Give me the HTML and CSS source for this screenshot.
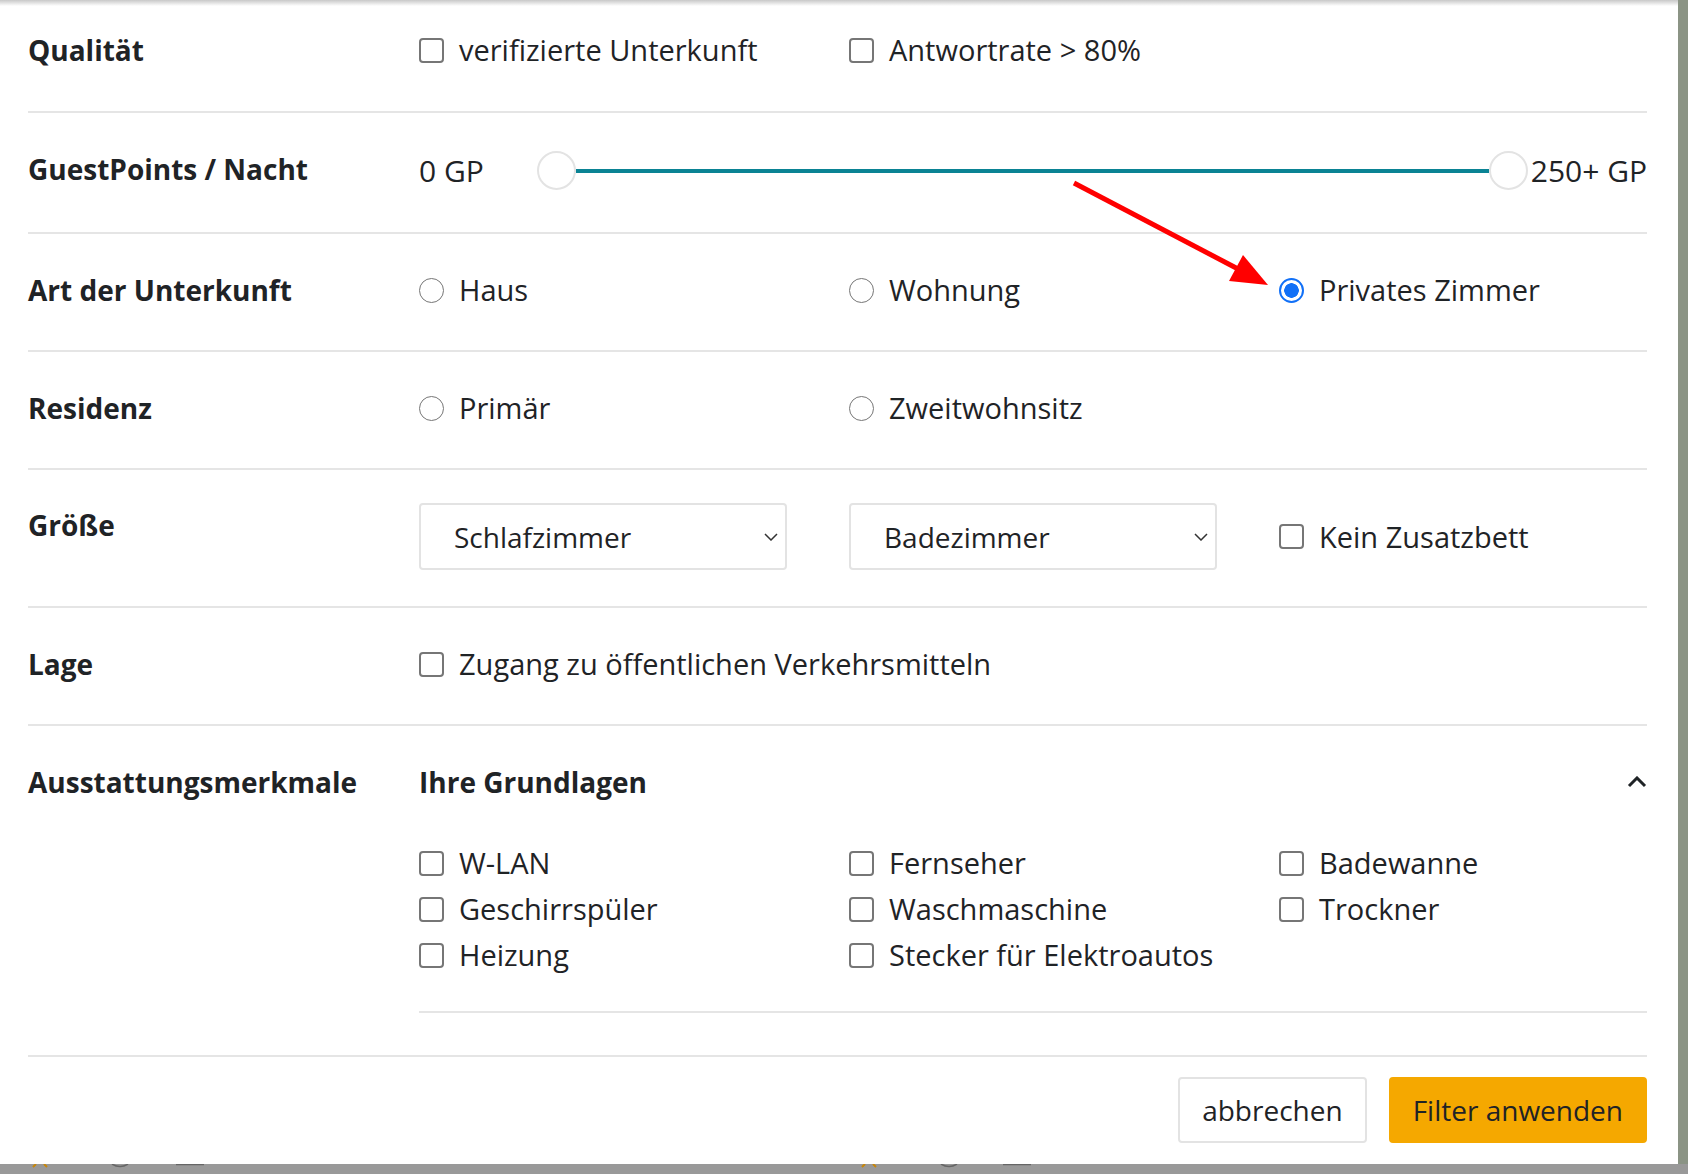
FILE: index.html
```html
<!DOCTYPE html>
<html lang="de">

<head>
    <meta charset="UTF-8">
    <meta name="viewport" content="width=device-width, initial-scale=1.0">
    <title>Filter</title>
    <link rel="stylesheet" href="styles.css">
</head>

<body>
    <div class="page">
        <div class="modal">
            <div class="modal-shadow"></div>
            <div class="modal-body">
                <div class="row row-first">
                    <div class="row-label">Qualität</div>
                    <div class="opts">
                        <label class="opt"><span class="box"></span>verifizierte Unterkunft</label>
                        <label class="opt"><span class="box"></span>Antwortrate &gt; 80%</label>
                    </div>
                </div>
                <div class="row">
                    <div class="row-label">GuestPoints / Nacht</div>
                    <div class="range">
                        <span class="range-text">0 GP</span>
                        <div class="range-bar">
                            <span class="thumb"></span>
                            <span class="track"></span>
                            <span class="thumb"></span>
                        </div>
                        <span class="range-text range-max">250+ GP</span>
                    </div>
                </div>
                <div class="row">
                    <div class="row-label">Art der Unterkunft</div>
                    <div class="opts">
                        <label class="opt"><span class="radio"></span>Haus</label>
                        <label class="opt"><span class="radio"></span>Wohnung</label>
                        <label class="opt"><span class="radio checked"></span>Privates Zimmer</label>
                    </div>
                </div>
                <div class="row">
                    <div class="row-label">Residenz</div>
                    <div class="opts">
                        <label class="opt"><span class="radio"></span>Primär</label>
                        <label class="opt"><span class="radio"></span>Zweitwohnsitz</label>
                    </div>
                </div>
                <div class="row row-size">
                    <div class="row-label">Größe</div>
                    <div class="opts">
                        <div class="select">Schlafzimmer
                            <svg width="14" height="8" viewBox="0 0 14 8"><path d="M1 1l6 6 6-6" fill="none" stroke="#333" stroke-width="1.5"/></svg>
                        </div>
                        <div class="select">Badezimmer
                            <svg width="14" height="8" viewBox="0 0 14 8"><path d="M1 1l6 6 6-6" fill="none" stroke="#333" stroke-width="1.5"/></svg>
                        </div>
                        <label class="opt"><span class="box"></span>Kein Zusatzbett</label>
                    </div>
                </div>
                <div class="row">
                    <div class="row-label">Lage</div>
                    <div class="opts">
                        <label class="opt opt-wide"><span class="box"></span>Zugang zu öffentlichen Verkehrsmitteln</label>
                    </div>
                </div>
                <div class="row row-last">
                    <div class="row-label">Ausstattungsmerkmale</div>
                    <div class="features">
                        <div class="features-head">
                            <span class="features-title">Ihre Grundlagen</span>
                            <svg width="20" height="12" viewBox="0 0 20 12"><path d="M2 10l8-8 8 8" fill="none" stroke="#1f2326" stroke-width="3"/></svg>
                        </div>
                        <div class="opts features-list">
                            <label class="opt"><span class="box"></span>W-LAN</label>
                            <label class="opt"><span class="box"></span>Fernseher</label>
                            <label class="opt"><span class="box"></span>Badewanne</label>
                            <label class="opt"><span class="box"></span>Geschirrspüler</label>
                            <label class="opt"><span class="box"></span>Waschmaschine</label>
                            <label class="opt"><span class="box"></span>Trockner</label>
                            <label class="opt"><span class="box"></span>Heizung</label>
                            <label class="opt"><span class="box"></span>Stecker für Elektroautos</label>
                        </div>
                    </div>
                </div>
            </div>
            <div class="modal-foot">
                <button class="btn">abbrechen</button>
                <button class="btn btn-primary">Filter anwenden</button>
            </div>
        </div>
        <div class="side"></div>
    </div>
    <div class="page-bottom">
        <!-- tops of the page icons peeking out under the modal -->
        <svg width="1688" height="11" viewBox="0 0 1688 11">
            <path d="M33 3l3-3M47 3l-3-3" stroke="#c8860a" stroke-width="2"/>
            <path d="M112 0q8 5 16 0" fill="none" stroke="#666" stroke-width="1.5"/>
            <path d="M176 0.5h28" stroke="#666" stroke-width="1.5"/>
            <path d="M862 3l3-3M876 3l-3-3" stroke="#c8860a" stroke-width="2"/>
            <path d="M941 0q8 5 16 0" fill="none" stroke="#666" stroke-width="1.5"/>
            <path d="M1003 0.5h28" stroke="#666" stroke-width="1.5"/>
        </svg>
    </div>

    <svg class="arrow" width="1688" height="1174" viewBox="0 0 1688 1174">
        <line x1="1074" y1="183" x2="1240" y2="270" stroke="#ff0000" stroke-width="5"/>
        <polygon points="1268,285 1229,281 1243,255" fill="#ff0000"/>
    </svg>
</body>

</html>
```

FILE: styles.css
```css
html * {
    padding: 0;
    margin: 0;
    box-sizing: border-box;
}

body {
    position: relative;
    width: 1688px;
    height: 1174px;
    overflow: hidden;
    background: #999;
    font-family: "Open Sans", "Noto Sans", sans-serif;
    color: #1f2326;
}

.page {
    display: flex;
    height: 1164px;
}

.side {
    width: 10px;
    background: #8b9485;
}

.page-bottom {
    height: 10px;
    background: #999;
}

.page-bottom svg {
    display: block;
}

.modal {
    flex: 1;
    display: flex;
    flex-direction: column;
    background: #fff;
    padding: 0 31px 0 28px;
    position: relative;
}

.modal-shadow {
    position: absolute;
    left: 0;
    right: 0;
    top: 0;
    height: 6px;
    background: linear-gradient(#c8c8c8, rgba(255, 255, 255, 0));
}

.row {
    display: grid;
    grid-template-columns: 391px 1fr;
    padding: 38px 0 42px;
    border-bottom: 2px solid #e5e5e5;
}

.row-first {
    padding-top: 32px;
    padding-bottom: 43px;
}

.row-size {
    padding-top: 33px;
    padding-bottom: 36px;
}

.row-size .row-label {
    margin-top: 4px;
}

.row-last {
    padding-bottom: 42px;
}

.row-label {
    font-weight: bold;
    font-size: 28px;
    line-height: 36px;
}

.opts {
    display: grid;
    grid-template-columns: repeat(3, 1fr);
    column-gap: 62px;
    align-items: center;
}

.opt {
    display: flex;
    align-items: center;
    gap: 15px;
    font-size: 29px;
    line-height: 36px;
    white-space: nowrap;
}

.opt-wide {
    grid-column: span 3;
}

.box {
    width: 25px;
    height: 25px;
    flex: none;
    border: 2px solid #767676;
    border-radius: 4px;
}

.radio {
    width: 25px;
    height: 25px;
    flex: none;
    border: 1.5px solid #767676;
    border-radius: 50%;
}

.radio.checked {
    border: 2px solid #1170f7;
    background: radial-gradient(circle, #1170f7 0 7px, #fff 7.5px);
}

.range {
    display: flex;
    align-items: center;
    font-size: 30px;
    line-height: 36px;
}

.range-bar {
    flex: 1;
    display: flex;
    align-items: center;
    margin-left: 53px;
}

.range-max {
    margin-left: 3px;
}

.thumb {
    width: 39px;
    height: 39px;
    border: 2px solid #e3e3e3;
    border-radius: 50%;
    background: #fff;
}

.track {
    flex: 1;
    height: 4px;
    background: #0a8394;
}

.select {
    display: flex;
    justify-content: space-between;
    align-items: center;
    height: 67px;
    padding: 0 7px 0 33px;
    border: 2px solid #e3e3e3;
    border-radius: 4px;
    font-size: 28px;
}

.features-head {
    display: flex;
    justify-content: space-between;
    align-items: center;
    font-size: 28px;
    line-height: 36px;
    font-weight: bold;
}

.features-list {
    row-gap: 10px;
    margin-top: 45px;
    padding-bottom: 38px;
    border-bottom: 2px solid #e5e5e5;
}

.modal-foot {
    display: flex;
    justify-content: flex-end;
    gap: 22px;
    padding: 20px 0;
}

.btn {
    height: 66px;
    padding: 0 22px;
    font-family: inherit;
    font-size: 28px;
    color: #1f2326;
    background: #fff;
    border: 2px solid #e3e3e3;
    border-radius: 4px;
}

.btn-primary {
    background: #f5a800;
    border-color: #f5a800;
}

.arrow {
    position: absolute;
    left: 0;
    top: 0;
    pointer-events: none;
}
```
